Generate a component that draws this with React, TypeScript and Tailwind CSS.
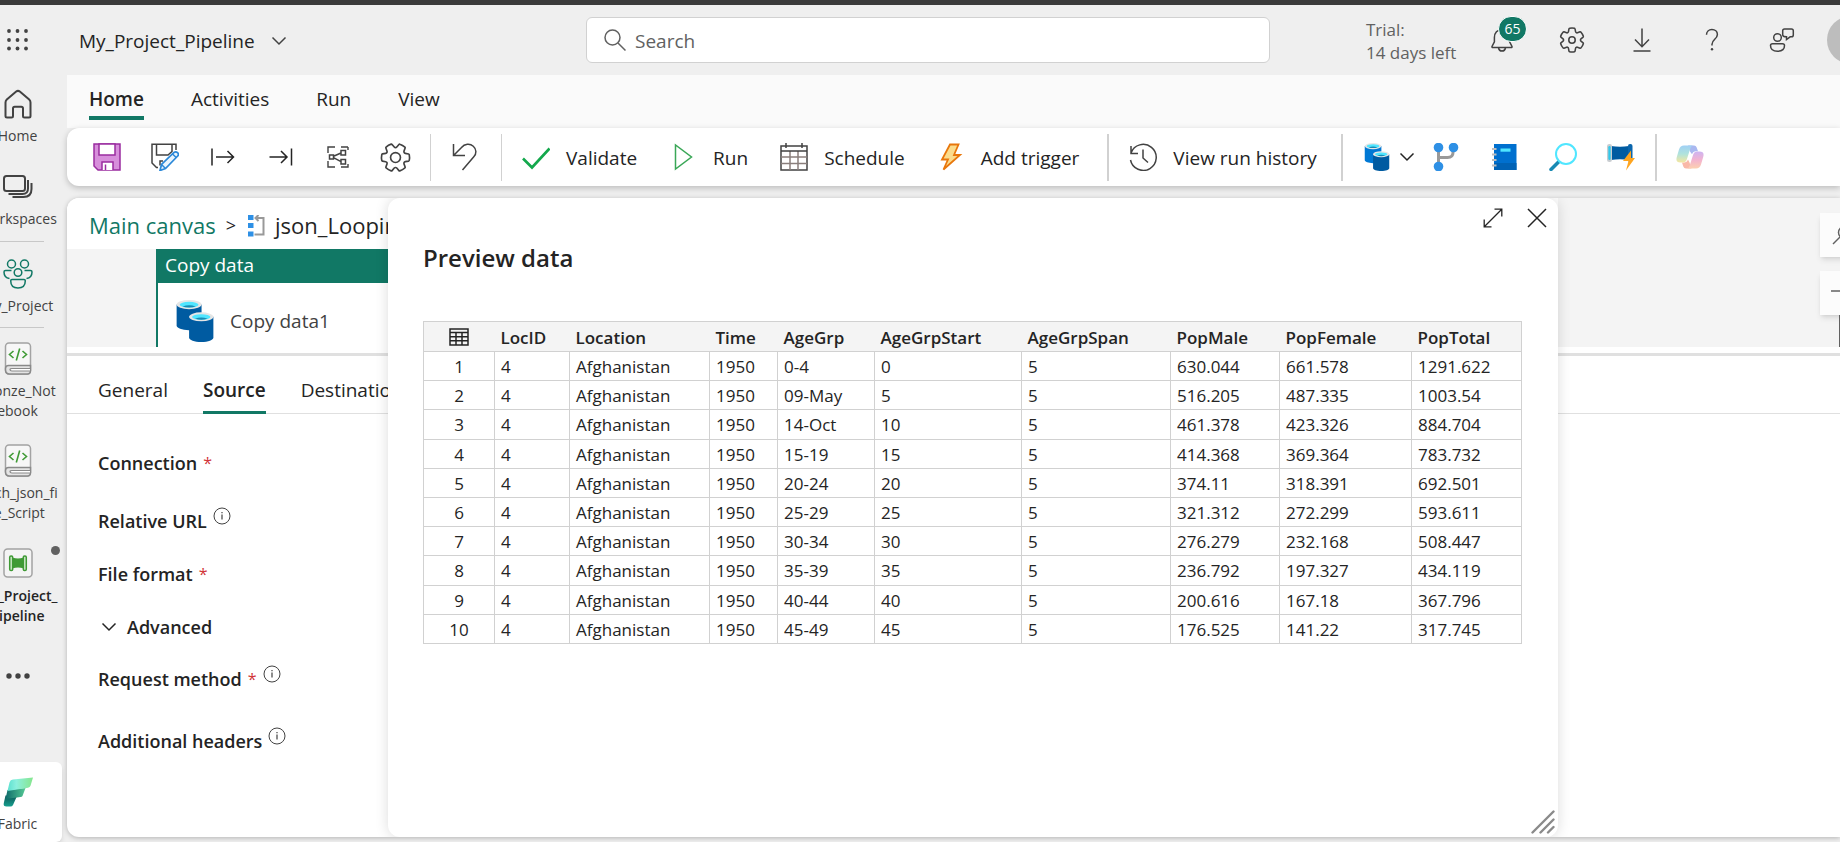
import type { ReactNode } from "react";

const GEAR =
  "M1.91 7.38A8.5 8.5 0 0 1 3.7 4.3a.5.5 0 0 1 .54-.13l1.92.68a1 1 0 0 0 1.32-.76l.36-2a.5.5 0 0 1 .4-.4 8.53 8.53 0 0 1 3.55 0c.2.04.35.2.38.4l.37 2a1 1 0 0 0 1.32.76l1.92-.68a.5.5 0 0 1 .54.13 8.5 8.5 0 0 1 1.78 3.08c.06.2 0 .4-.15.54l-1.56 1.32a1 1 0 0 0 0 1.52l1.56 1.32a.5.5 0 0 1 .15.54 8.5 8.5 0 0 1-1.78 3.08.5.5 0 0 1-.54.13l-1.92-.68a1 1 0 0 0-1.32.76l-.37 2a.5.5 0 0 1-.38.4 8.53 8.53 0 0 1-3.56 0 .5.5 0 0 1-.39-.4l-.36-2a1 1 0 0 0-1.32-.76l-1.92.68a.5.5 0 0 1-.54-.13 8.5 8.5 0 0 1-1.78-3.08.5.5 0 0 1 .15-.54l1.56-1.32a1 1 0 0 0 0-1.52L2.06 7.92a.5.5 0 0 1-.15-.54Z";

type IconProps = { size?: number; box?: string; className?: string; children: ReactNode; w?: number };

function Icon({ size = 28, w, box = "0 0 28 28", className = "", children }: IconProps) {
  return (
    <svg
      width={w ?? size}
      height={size}
      viewBox={box}
      fill="none"
      stroke="currentColor"
      strokeWidth="1.5"
      aria-hidden="true"
      className={`shrink-0 ${className}`}
    >
      {children}
    </svg>
  );
}

function Chevron({ className = "" }: { className?: string }) {
  return (
    <Icon w={16} size={10} box="0 0 16 10" className={className}>
      <path d="M1.5 1.5 8 8l6.5-6.5" />
    </Icon>
  );
}

function Info() {
  return (
    <button type="button" aria-label="More information" className="mb-2.5 text-[#424242]">
      <Icon size={18} box="0 0 18 18">
        <circle cx="9" cy="9" r="8" strokeWidth="1" />
        <path d="M9 7.5v5M9 5v1.3" strokeWidth="1.2" />
      </Icon>
    </button>
  );
}

function Databases({ size, light }: { size: number; light?: string }) {
  return (
    <Icon size={size} box="0 0 28 32">
      <g stroke="none">
        <path d="M0 3.500v16c0 2 4 3.500 9.500 3.500S19 21.500 19 19.500v-16z" fill={light ?? "#005ba1"} />
        <ellipse cx="9.500" cy="3.500" rx="9.500" ry="3.500" fill="#e6e6e6" />
        <ellipse cx="9.500" cy="3.600" rx="7.200" ry="2.200" fill="#50e6ff" />
        <path d="M4.500 5q5-2 10 0-5 1.600-10 0" fill="#198ab3" />
        <path d="M9.500 12.800v15.700c0 2 4 3.500 9.300 3.500s9.200-1.500 9.200-3.500V12.800z" fill="#005ba1" />
        <ellipse cx="18.750" cy="12.800" rx="9.250" ry="3.400" fill="#e6e6e6" />
        <ellipse cx="18.750" cy="12.900" rx="7" ry="2.100" fill="#50e6ff" />
        <path d="M14 14.200q4.800-1.800 9.600 0-4.800 1.600-9.600 0" fill="#198ab3" />
      </g>
    </Icon>
  );
}

function NotebookIcon() {
  return (
    <Icon w={28} size={33} box="0 0.500 28 33">
      <rect x="1.500" y="1.500" width="25" height="31" rx="3.500" fill="#f7f7f7" stroke="#a3a3a3" />
      <path d="M1.500 28V27q0-3 3-3h22v5q0 3.500-3 3.500h-18q-4 0-4-4.500z" fill="#e4e4e4" stroke="#8a8a8a" />
      <path d="M26 27H8q-2 0-2 1.200T8 29.500h18" stroke="#8a8a8a" strokeWidth="1.200" fill="#fff" />
      <path d="m9.500 9.500-4 3.500 4 3.500M18.500 9.500l4 3.500-4 3.500M15.700 7l-3.400 12" stroke="#3f9a35" strokeWidth="1.600" />
    </Icon>
  );
}

function Header() {
  return (
    <header className="flex h-[70px] shrink-0 items-center">
      <div className="flex w-[570px] shrink-0 items-center pl-1">
        <button type="button" aria-label="App launcher" className="flex text-[#424242]">
          <Icon>
            <g fill="currentColor" stroke="none">
              {[5, 14, 22.5].map((y) =>
                [5, 13.5, 22].map((x) => <circle key={`${x}-${y}`} cx={x} cy={y} r="1.900" />),
              )}
            </g>
          </Icon>
        </button>
        <button type="button" className="ml-[47px] flex items-center gap-4 pt-0.5 text-[19px] text-[#242424]">
          My_Project_Pipeline
          <Chevron className="text-[#424242]" />
        </button>
      </div>
      <label className="ml-4 flex h-[46px] w-[684px] shrink-0 items-center gap-2 rounded-md border border-[#d1d1d1] bg-white px-4">
        <Icon size={24} box="0 0 24 24" className="text-[#616161]">
          <circle cx="9.500" cy="9.500" r="7.500" />
          <path d="m15 15 7.500 7.500" />
        </Icon>
        <input
          type="search"
          aria-label="Search"
          placeholder="Search"
          className="w-full bg-transparent pt-0.5 text-[19px] text-[#242424] outline-none placeholder:text-[#616161]"
        />
      </label>
      <div className="ml-24 w-[122px] shrink-0 pt-0.5 text-[17px] leading-[23px] text-[#616161]">
        Trial:
        <br />
        14 days left
      </div>
      <div className="flex shrink-0 items-center gap-[42px] text-[#424242]">
        <button type="button" aria-label="Notifications, 65 unread" className="relative flex">
          <Icon>
            <path d="M14 3.500c-4.700 0-7.600 3.600-7.600 8v4.300L4 20.500q-.3 1 .8 1h18.400q1.100 0 .8-1l-2.400-4.700v-4.300c0-4.400-2.900-8-7.600-8Z" />
            <path d="M10.500 22c.4 2 1.700 3 3.500 3s3.100-1 3.500-3" />
          </Icon>
          <span className="absolute -top-2.5 left-2.5 flex h-[26px] w-[29px] items-center justify-center rounded-full border border-white bg-[#117865] text-[14px] leading-none text-white">
            65
          </span>
        </button>
        <button type="button" aria-label="Settings" className="flex">
          <Icon box="0 0 20 20">
            <path d={GEAR} strokeWidth="1.100" />
            <circle cx="10" cy="10" r="2.300" strokeWidth="1.100" />
          </Icon>
        </button>
        <button type="button" aria-label="Download" className="flex">
          <Icon>
            <path d="M14 2.500v18M7 13.500l7 7.200 7-7.200M5.500 25h17" />
          </Icon>
        </button>
        <button type="button" aria-label="Help" className="flex">
          <Icon>
            <path d="M8.500 8.800c0-3.200 2.300-5.300 5.400-5.300s5.500 2 5.500 5c0 4.600-5.400 5-5.400 9.700v1.300" />
            <circle cx="14" cy="23.200" r="1.200" fill="currentColor" stroke="none" />
          </Icon>
        </button>
        <button type="button" aria-label="Feedback" className="flex">
          <Icon>
            <circle cx="9.500" cy="11.500" r="3.800" />
            <path d="M4.500 17.800h10q2 0 2 1.800c0 3.600-2.800 5.700-7 5.700s-7-2.100-7-5.700q0-1.800 2-1.800Z" />
            <path d="M16.500 3h7q1.800 0 1.800 1.800V9q0 1.800-1.800 1.800h-1.300l-3.700 2.700v-2.700q-3.800 0-3.800-1.800V4.800Q14.700 3 16.500 3Z" />
          </Icon>
        </button>
      </div>
      <button type="button" aria-label="Account" className="ml-[31px] size-12 shrink-0 rounded-full bg-[#bdbdbd]" />
    </header>
  );
}

function RailItem({ label, children, bold }: { label: ReactNode; children: ReactNode; bold?: boolean }) {
  return (
    <a
      href="#"
      className={`flex w-full flex-col items-center text-center text-[14px] leading-5 whitespace-nowrap ${
        bold ? "font-semibold text-[#242424]" : "text-[#424242]"
      }`}
    >
      {children}
      <span className="mt-1.5">{label}</span>
    </a>
  );
}

function Rail() {
  return (
    <nav className="-ml-8 flex w-[99px] shrink-0 flex-col items-center pt-[13px]">
      <RailItem label="Home">
        <Icon size={32} box="0 0 32 32" className="text-[#424242]">
          <path
            d="m14.200 3.600-9.400 8Q3.500 12.800 3.500 14.500V28q0 1.500 1.500 1.500h4.500q1.500 0 1.500-1.500v-7.500q0-1.700 1.700-1.700h6.600q1.700 0 1.700 1.700V28q0 1.500 1.500 1.500H27q1.500 0 1.500-1.500V14.500q0-1.700-1.300-2.900l-9.400-8q-1.800-1.500-3.600 0Z"
            strokeWidth="2"
          />
        </Icon>
      </RailItem>
      <div className="h-[27px]" />
      <RailItem label="Workspaces">
        <Icon w={30} size={30} box="0 1 30 30" className="text-[#424242]">
          <g strokeWidth="2">
            <rect x="1" y="4" width="21" height="15" rx="2.500" />
            <path d="M25 8v8.500q0 5.500-5.500 5.500H5.500M28.500 11v6q0 8-8 8H9.500" />
          </g>
        </Icon>
      </RailItem>
      <div className="mt-3 mb-4 h-px w-[53px] bg-[#c8c8c8]" />
      <RailItem label="My_Project">
        <Icon w={30} size={32} box="0 0 30 32" className="text-[#117865]">
          <circle cx="8.500" cy="6" r="4" />
          <circle cx="21.500" cy="6" r="4" />
          <circle cx="15" cy="14.500" r="3.800" />
          <path d="M8.500 12.500h-6q-1.500 0-1.500 1.500c0 4 2 6 5.500 6.500M21.500 12.500h6q1.500 0 1.500 1.500c0 4-2 6-5.500 6.500" />
          <path d="M9 21.500h12q1.300 0 1.300 1.300c0 4.500-2.600 7.200-7.300 7.200s-7.300-2.700-7.300-7.200Q7.700 21.500 9 21.500Z" />
        </Icon>
      </RailItem>
      <div className="mt-[11px] mb-3.5 h-px w-[53px] bg-[#c8c8c8]" />
      <RailItem
        label={
          <>
            Bronze_Not
            <br />
            ebook
          </>
        }
      >
        <NotebookIcon />
      </RailItem>
      <div className="h-[23px]" />
      <RailItem
        label={
          <>
            fetch_json_fi
            <br />
            le_Script
          </>
        }
      >
        <NotebookIcon />
      </RailItem>
      <div className="h-[23px]" />
      <div className="relative w-full">
        <RailItem
          bold
          label={
            <>
              My_Project_
              <br />
              Pipeline
            </>
          }
        >
          <Icon size={34} box="-2 0 34 34">
            <rect x="1" y="3" width="28" height="28" rx="3.500" fill="#f4f4f4" stroke="#a3a3a3" />
            <path d="M9.500 12.500q5.500 1.500 11 0v9q-5.500-1.500-11 0z" fill="#3f9a35" stroke="#3f9a35" />
            <rect x="6.700" y="10" width="3" height="14.500" rx="1.300" fill="#c9e6c5" stroke="#3f9a35" />
            <rect x="20.300" y="10" width="3" height="14.500" rx="1.300" fill="#c9e6c5" stroke="#3f9a35" />
          </Icon>
        </RailItem>
        <span className="absolute top-0 right-[7px] size-[9px] rounded-full bg-[#616161]" />
      </div>
      <button type="button" aria-label="More" className="mt-9 flex text-[#424242]">
        <Icon>
          <g fill="currentColor" stroke="none">
            <circle cx="5" cy="14" r="2.700" />
            <circle cx="14" cy="14" r="2.700" />
            <circle cx="23" cy="14" r="2.700" />
          </g>
        </Icon>
      </button>
      <div className="mt-auto mr-[5px] w-[94px] rounded-r-md bg-white pt-3.5 pb-2 pl-[5px] shadow-md">
        <RailItem label="Fabric">
          <Icon w={30} size={32} box="0 0 30 32">
            <defs>
              <linearGradient id="fabricTop" x1="0" y1="0" x2="1" y2="0">
                <stop offset="0" stopColor="#5ce0cf" />
                <stop offset=".35" stopColor="#8bf0de" />
                <stop offset="1" stopColor="#86e58c" />
              </linearGradient>
              <linearGradient id="fabricMid" x1="0" y1="0" x2="1" y2="0">
                <stop offset="0" stopColor="#0f6b6b" />
                <stop offset="1" stopColor="#54c894" />
              </linearGradient>
              <linearGradient id="fabricLow" x1="0" y1="0" x2="0" y2="1">
                <stop offset="0" stopColor="#0d5757" />
                <stop offset="1" stopColor="#17a08f" />
              </linearGradient>
            </defs>
            <g stroke="none">
              <path d="M2.500 19.500 14 20l-4 9q-.8 1.500-2.500 1.500H3.500Q0 30.500.800 27z" fill="url(#fabricLow)" />
              <path d="m4.500 14 18-2-3 8Q19 21 17.500 21L2.500 23z" fill="url(#fabricMid)" />
              <path d="M10 3.500 30 1.500l-2.500 8.300Q27 11.500 25 11.700L4.500 15l2-8.500Q7.300 3.700 10 3.500Z" fill="url(#fabricTop)" />
            </g>
          </Icon>
        </RailItem>
      </div>
    </nav>
  );
}

function MenuTabs() {
  return (
    <div role="tablist" className="flex h-[53px] items-start gap-[47px] bg-[#fafafa] pt-[7px] pl-[22px] text-[19px] text-[#242424]">
      <button type="button" role="tab" aria-selected="true" className="border-b-4 border-[#117865] leading-[34px] font-semibold">
        Home
      </button>
      {["Activities", "Run", "View"].map((t) => (
        <button key={t} type="button" role="tab" aria-selected="false" className="leading-[34px]">
          {t}
        </button>
      ))}
    </div>
  );
}

function ToolButton({ label, children }: { label: string; children: ReactNode }) {
  return (
    <button type="button" aria-label={label} className="flex w-[58px] shrink-0 items-center justify-center gap-2 text-[#242424]">
      {children}
    </button>
  );
}

function TextButton({ label, children }: { label: string; children: ReactNode }) {
  return (
    <button type="button" className="flex shrink-0 items-center gap-4 text-[19px] text-[#242424]">
      {children}
      <span className="pt-0.5">{label}</span>
    </button>
  );
}

const Rule = ({ thick }: { thick?: boolean }) => (
  <div className={`h-[47px] shrink-0 bg-[#d1d1d1] ${thick ? "w-0.5" : "w-px"}`} />
);

function Toolbar() {
  return (
    <div className="relative flex h-[58px] shrink-0 items-center rounded-l-xl bg-white pl-[11px] shadow-[0_2px_6px_rgba(0,0,0,0.22)]">
      <ToolButton label="Save">
        <Icon>
          <path d="M1 1h26v26H5l-4-4z" fill="#d78fdb" stroke="#9a2da0" />
          <path d="M6 1h16v11H6z" fill="#fff" stroke="#9a2da0" />
          <path d="M9 27v-8h11v8" fill="#fff" stroke="#9a2da0" />
          <path d="M12.500 21.500V27" stroke="#9a2da0" />
        </Icon>
      </ToolButton>
      <ToolButton label="Save as">
        <Icon>
          <g className="text-[#424242]">
            <path d="M25 7V1.200H1V20l4.500 4.500H7M5.500 1.500V12H17l4-3.500v-7M9 22.500v-4.500h3" />
          </g>
          <path d="m9 27.500 1.500-6L23 9.500q1.800-1.500 3.500.2t.2 3.300L14.500 25.500z" stroke="#2b88d8" strokeWidth="1.700" fill="#eaf5fd" />
          <path d="m10.500 21.500 4 4M21.500 11l4 3.800" stroke="#2b88d8" />
        </Icon>
      </ToolButton>
      <ToolButton label="Go to start">
        <Icon>
          <path d="M3 5.500v17M7 14h17.500M18.500 8l6 6-6 6" />
        </Icon>
      </ToolButton>
      <ToolButton label="Go to end">
        <Icon>
          <path d="M2.500 14h17.500M14 8l6 6-6 6M24.500 5.500v17" />
        </Icon>
      </ToolButton>
      <ToolButton label="Auto align">
        <Icon>
          <g className="text-[#424242]">
            <path d="M3 10V4h7M16 4h7M23 4v3M3 18v6h7M16 24h7v-3" strokeWidth="1.400" />
            <path d="M4.500 12h4v4h-4zM16 7.500h4.500V12H16zM16 16.500h4.500V21H16zM8.500 13.300l7.500-3.300M8.500 14.700l7.500 4" />
          </g>
        </Icon>
      </ToolButton>
      <ToolButton label="Pipeline settings">
        <Icon size={33} box="0 0 20 20" className="mr-[3px] text-[#424242]">
          <path d={GEAR} strokeWidth="1" transform="rotate(30 10 10)" />
          <circle cx="10" cy="10" r="3" strokeWidth="1" />
        </Icon>
      </ToolButton>
      <div className="ml-1">
        <Rule />
      </div>
      <div className="ml-[5px]">
        <ToolButton label="Undo">
          <Icon className="text-[#424242]">
            <path d="M2.500 1v11.500H14M2.800 12.200 10.500 4.500c3-3.800 8.500-4.200 11.800-1.300s3.400 7.500.5 10.500L11.500 27" />
          </Icon>
        </ToolButton>
      </div>
      <div className="ml-[7px]">
        <Rule />
      </div>
      <div className="ml-5 flex gap-8">
        <TextButton label="Validate">
          <Icon>
            <path d="m1 15.500 9 9L27.500 5.500" stroke="#13a84c" strokeWidth="2.600" />
          </Icon>
        </TextButton>
        <TextButton label="Run">
          <Icon>
            <path d="M6.500 2v24l16-12z" stroke="#3aa757" />
          </Icon>
        </TextButton>
        <TextButton label="Schedule">
          <Icon>
            <path d="M1 3h26v24H1z" stroke="#424242" />
            <path d="M10 8v19M18 8v19M1 14h26M1 20.500h26" stroke="#8a7f7c" />
            <path d="M1 8h26M6 0v5M22 0v5" stroke="#424242" />
          </Icon>
        </TextButton>
        <TextButton label="Add trigger">
          <Icon>
            <path d="M13 1.500h8.500L17 12h6L6.500 26.500 11 16.500H5z" stroke="#e8770c" strokeWidth="1.800" fill="#fbdc8c" />
          </Icon>
        </TextButton>
      </div>
      <div className="ml-7">
        <Rule thick />
      </div>
      <div className="ml-5">
        <TextButton label="View run history">
          <Icon className="text-[#424242]">
            <path d="M2 10A13 13 0 1 1 1.500 17M2 3v7.500h7M14 6.500V15l5 4.500" />
          </Icon>
        </TextButton>
      </div>
      <div className="ml-6">
        <Rule thick />
      </div>
      <div className="ml-[17px] flex">
        <ToolButton label="Add copy activity">
          <Databases size={28} light="#0078d4" />
          <Chevron />
        </ToolButton>
        <ToolButton label="Dataflow">
          <Icon>
            <path d="M5.500 4v21M5.500 14.500h9q5.500 0 5.500-5V5" stroke="#999" strokeWidth="3" />
            <g fill="#2e90e5" stroke="none">
              <circle cx="5.500" cy="4.500" r="4.800" />
              <circle cx="20.500" cy="4.500" r="4.800" />
              <circle cx="5.500" cy="23.500" r="4.800" />
            </g>
          </Icon>
        </ToolButton>
        <ToolButton label="Notebook">
          <Icon>
            <path d="M3 1h22.500v26H3z" fill="#0070cf" stroke="none" />
            <path d="M3 20h22.500v7H3z" fill="#0062b5" stroke="none" />
            <path d="M9.500 5.500h10v3.200h-10z" fill="#50e6ff" stroke="none" />
            <path d="M1 6h4.500M1 11.500h4.500M1 17h4.500M1 22.500h4.500" stroke="#bdbdbd" strokeWidth="2" />
          </Icon>
        </ToolButton>
        <ToolButton label="Lookup">
          <Icon>
            <path d="m2 26.500 8.500-8.500" stroke="#198ab3" strokeWidth="3.500" strokeLinecap="round" />
            <circle cx="17" cy="11" r="10" stroke="#50e6ff" strokeWidth="2" fill="#fff" />
          </Icon>
        </ToolButton>
        <ToolButton label="Invoke pipeline">
          <Icon>
            <g stroke="none">
              <path d="M4 3q9 1.500 18 0v14q-9-1.500-18 0z" fill="#005ba1" />
              <rect x="21" y="1" width="4.500" height="18" rx="2" fill="#0b66ad" />
              <rect x="0" y="1" width="5" height="18" rx="2.300" fill="#c8ccd0" />
              <rect x="1.300" y="3" width="2.400" height="14" rx="1.200" fill="#32c8ea" />
              <path d="M24 7.500 16 18h5.500L19 27.500l9-12.500H24z" fill="#ffa51f" />
            </g>
          </Icon>
        </ToolButton>
      </div>
      <div className="ml-[5px]">
        <Rule thick />
      </div>
      <div className="ml-1">
        <ToolButton label="Copilot">
          <Icon>
            <defs>
              <linearGradient id="copilotA" x1="0" y1="0" x2="0" y2="1">
                <stop offset="0" stopColor="#9fd0f5" />
                <stop offset=".5" stopColor="#b0e3dc" />
                <stop offset="1" stopColor="#f5e79f" />
              </linearGradient>
              <linearGradient id="copilotB" x1="0" y1="0" x2="0" y2="1">
                <stop offset="0" stopColor="#cdb4f2" />
                <stop offset=".5" stopColor="#f3b3cf" />
                <stop offset="1" stopColor="#fcd0b0" />
              </linearGradient>
            </defs>
            <g stroke="none">
              <path d="M12 2.500h6q2 0 2.700 2l1.300 3.800h-2q-3 0-4 3L14 8.500 12.500 4z" fill="#a9b8f0" />
              <path d="M15.500 25.500H10q-2 0-2.700-2L6 19.500h2q3 0 4-3l1.500 3 1 3z" fill="#f9b9a8" />
              <path d="M8 2.500h9q-2 .5-2.700 3l-3.500 11q-1 3-4 3H4.500Q-.800 19.500.800 14L3 6.500q1.200-4 5-4Z" fill="url(#copilotA)" />
              <path d="M20 25.500h-9q2-.5 2.700-3l3.500-11q1-3 4-3h2.300q5.300 0 3.700 5.500L25 21.500q-1.200 4-5 4Z" fill="url(#copilotB)" />
            </g>
          </Icon>
        </ToolButton>
      </div>
    </div>
  );
}

function Canvas() {
  return (
    <>
      <div className="flex h-[51px] shrink-0 items-center gap-2.5 bg-white pt-1 pl-[22px] text-[22px] text-[#242424]">
        <a href="#" className="text-[#117865]">
          Main canvas
        </a>
        <span className="text-[18px]">&gt;</span>
        <span className="flex items-center gap-2.5 pl-0.5">
          <Icon w={17} size={22} box="0 0 17 22">
            <path d="M0 0h5.500v5H0zM0 8h5.500v5H0zM0 16.500h5.500v5H0z" fill="#2e90e5" stroke="none" />
            <path d="M7.500 3H15.500V19.500H6.500M10.500 0l-3 3 3 3" stroke="#999" strokeWidth="2" />
          </Icon>
          json_Looping
        </span>
      </div>
      <div className="flex h-[98px] shrink-0 overflow-hidden bg-[#f4f4f4]">
        <div className="ml-[89px] w-[400px] border-l-2 border-[#117865] bg-white">
          <div className="h-[34px] bg-[#117865] pl-[7px] text-[19px] leading-8 font-medium text-white">Copy data</div>
          <div className="flex items-center gap-3.5 pt-[17px] pl-4 text-[19px] text-[#424242]">
            <Databases size={42} />
            Copy data1
          </div>
        </div>
      </div>
      <div className="h-1.5 shrink-0 bg-white" />
      <div className="h-[3px] shrink-0 bg-[#e0e0e0]" />
    </>
  );
}

function Field({ label, required, info, className }: { label: string; required?: boolean; info?: boolean; className: string }) {
  return (
    <div className={`flex items-center gap-1.5 ${className}`}>
      <span>{label}</span>
      {required && <span className="text-[16px] font-normal text-[#d13438]">*</span>}
      {info && <Info />}
    </div>
  );
}

function Properties() {
  return (
    <section className="flex-1">
      <div role="tablist" className="flex h-[58px] items-end gap-[35px] border-b border-[#e0e0e0] pl-[31px] text-[19px] text-[#242424]">
        <button type="button" role="tab" aria-selected="false" className="pb-2 leading-[30px]">
          General
        </button>
        <button type="button" role="tab" aria-selected="true" className="-mb-px border-b-[3px] border-[#117865] pb-1.5 leading-[30px] font-semibold">
          Source
        </button>
        <button type="button" role="tab" aria-selected="false" className="pb-2 leading-[30px]">
          Destination
        </button>
      </div>
      <div className="pl-[31px] text-[18px] leading-[26px] font-semibold text-[#242424]">
        <Field label="Connection" required className="mt-9" />
        <Field label="Relative URL" info className="mt-[31px]" />
        <Field label="File format" required className="mt-[26px]" />
        <button type="button" className="mt-[27px] flex items-center gap-2.5">
          <Chevron className="ml-[3px]" />
          Advanced
        </button>
        <Field label="Request method" required info className="mt-[25px]" />
        <Field label="Additional headers" info className="mt-[34px]" />
      </div>
    </section>
  );
}

const COLUMNS = [
  { name: "LocID", w: "w-[75px]" },
  { name: "Location", w: "w-[140px]" },
  { name: "Time", w: "w-[68px]" },
  { name: "AgeGrp", w: "w-[97px]" },
  { name: "AgeGrpStart", w: "w-[147px]" },
  { name: "AgeGrpSpan", w: "w-[149px]" },
  { name: "PopMale", w: "w-[109px]" },
  { name: "PopFemale", w: "w-[132px]" },
  { name: "PopTotal", w: "w-[110px]" },
];

const ROWS = [
  ["0-4", "0", "630.044", "661.578", "1291.622"],
  ["09-May", "5", "516.205", "487.335", "1003.54"],
  ["14-Oct", "10", "461.378", "423.326", "884.704"],
  ["15-19", "15", "414.368", "369.364", "783.732"],
  ["20-24", "20", "374.11", "318.391", "692.501"],
  ["25-29", "25", "321.312", "272.299", "593.611"],
  ["30-34", "30", "276.279", "232.168", "508.447"],
  ["35-39", "35", "236.792", "197.327", "434.119"],
  ["40-44", "40", "200.616", "167.18", "367.796"],
  ["45-49", "45", "176.525", "141.22", "317.745"],
];

function PreviewDialog() {
  return (
    <div
      role="dialog"
      aria-labelledby="preview-title"
      className="absolute inset-y-0 right-[282px] left-[321px] rounded-xl bg-white pr-9 pl-[35px] text-[#242424] shadow-[0_0_14px_rgba(0,0,0,0.14)]"
    >
      <div className="-mr-[25px] flex h-10 items-center justify-end gap-6">
        <button type="button" aria-label="Expand" className="flex">
          <Icon size={20} box="0 0 20 20">
            <path d="M1.500 18.500l17-17M11.500 1.200h7.300v7.300M1.200 11.500v7.300h7.300" strokeWidth="1.300" />
          </Icon>
        </button>
        <button type="button" aria-label="Close" className="flex">
          <Icon size={20} box="0 0 20 20">
            <path d="m1 1 18 18M19 1 1 19" />
          </Icon>
        </button>
      </div>
      <h2 id="preview-title" className="mt-1 text-[24px] leading-8 font-semibold">
        Preview data
      </h2>
      <table className="mt-[47px] h-[323px] w-full table-fixed border-collapse border border-[#d1d1d1] text-left text-[17px] leading-6">
        <thead className="bg-[#f4f4f4]">
          <tr className="border-b border-[#d1d1d1]">
            <th className="h-[30px] w-[71px] p-0" aria-label="Row">
              <Icon w={20} size={18} box="0 0 20 18" className="mx-auto">
                <path d="M1 1h18v16H1zM1 4.500h18M1 8.700h18M1 12.800h18M7 4.500V17M13 4.500V17" />
              </Icon>
            </th>
            {COLUMNS.map((c) => (
              <th key={c.name} className={`p-0 pt-0.5 pl-1.5 font-semibold ${c.w}`}>
                {c.name}
              </th>
            ))}
          </tr>
        </thead>
        <tbody>
          {ROWS.map(([grp, start, male, female, total], i) => (
            <tr key={grp}>
              <td className="border border-[#d1d1d1] p-0 pt-0.5 text-center">{i + 1}</td>
              {["4", "Afghanistan", "1950", grp, start, "5", male, female, total].map((v, j) => (
                <td key={j} className="border border-[#d1d1d1] p-0 pt-0.5 pl-1.5">
                  {v}
                </td>
              ))}
            </tr>
          ))}
        </tbody>
      </table>
      <Icon size={24} box="0 0 24 24" className="absolute right-[3px] bottom-[3px] text-[#8a8a8a]">
        <path d="M1.500 22.500l21-21M9.500 22.500l13-13M17 22.500l5.500-5.500" strokeWidth="2.400" strokeLinecap="round" />
      </Icon>
    </div>
  );
}

function CanvasControls() {
  return (
    <div className="absolute top-0 right-0 h-[149px] w-[282px] overflow-hidden bg-[#f4f4f4] pt-[15px]">
      <div className="-mr-6 ml-auto flex w-11 flex-col gap-3.5 text-[#616161]">
        <button type="button" aria-label="Search canvas" className="flex h-11 items-center justify-center bg-[#fcfcfc] shadow-md">
          <Icon size={20} box="0 0 20 20">
            <circle cx="12.500" cy="7.500" r="6" />
            <path d="m1 19 7-7" />
          </Icon>
        </button>
        <button type="button" aria-label="Zoom in" className="flex h-11 items-center justify-center bg-[#fcfcfc] shadow-md">
          <Icon size={24} box="0 0 24 24">
            <path d="M1 10h22M12 1v22" />
          </Icon>
        </button>
        <div className="-mt-3.5 ml-[19px] h-8 w-0.5 bg-[#616161]" />
      </div>
    </div>
  );
}

export default function App() {
  return (
    <div className="flex h-screen min-h-[842px] flex-col overflow-hidden border-t-[5px] border-[#3b3b3b] bg-[#efefef] font-['Open_Sans','Noto_Sans',sans-serif]">
      <Header />
      <div className="flex min-h-0 flex-1">
        <Rail />
        <main className="flex min-w-0 flex-1 flex-col pb-[5px]">
          <MenuTabs />
          <Toolbar />
          <div className="relative mt-3 flex flex-1 flex-col overflow-hidden rounded-l-xl bg-white shadow-[0_1px_5px_rgba(0,0,0,0.25)]">
            <Canvas />
            <Properties />
            <CanvasControls />
            <PreviewDialog />
          </div>
        </main>
      </div>
    </div>
  );
}
